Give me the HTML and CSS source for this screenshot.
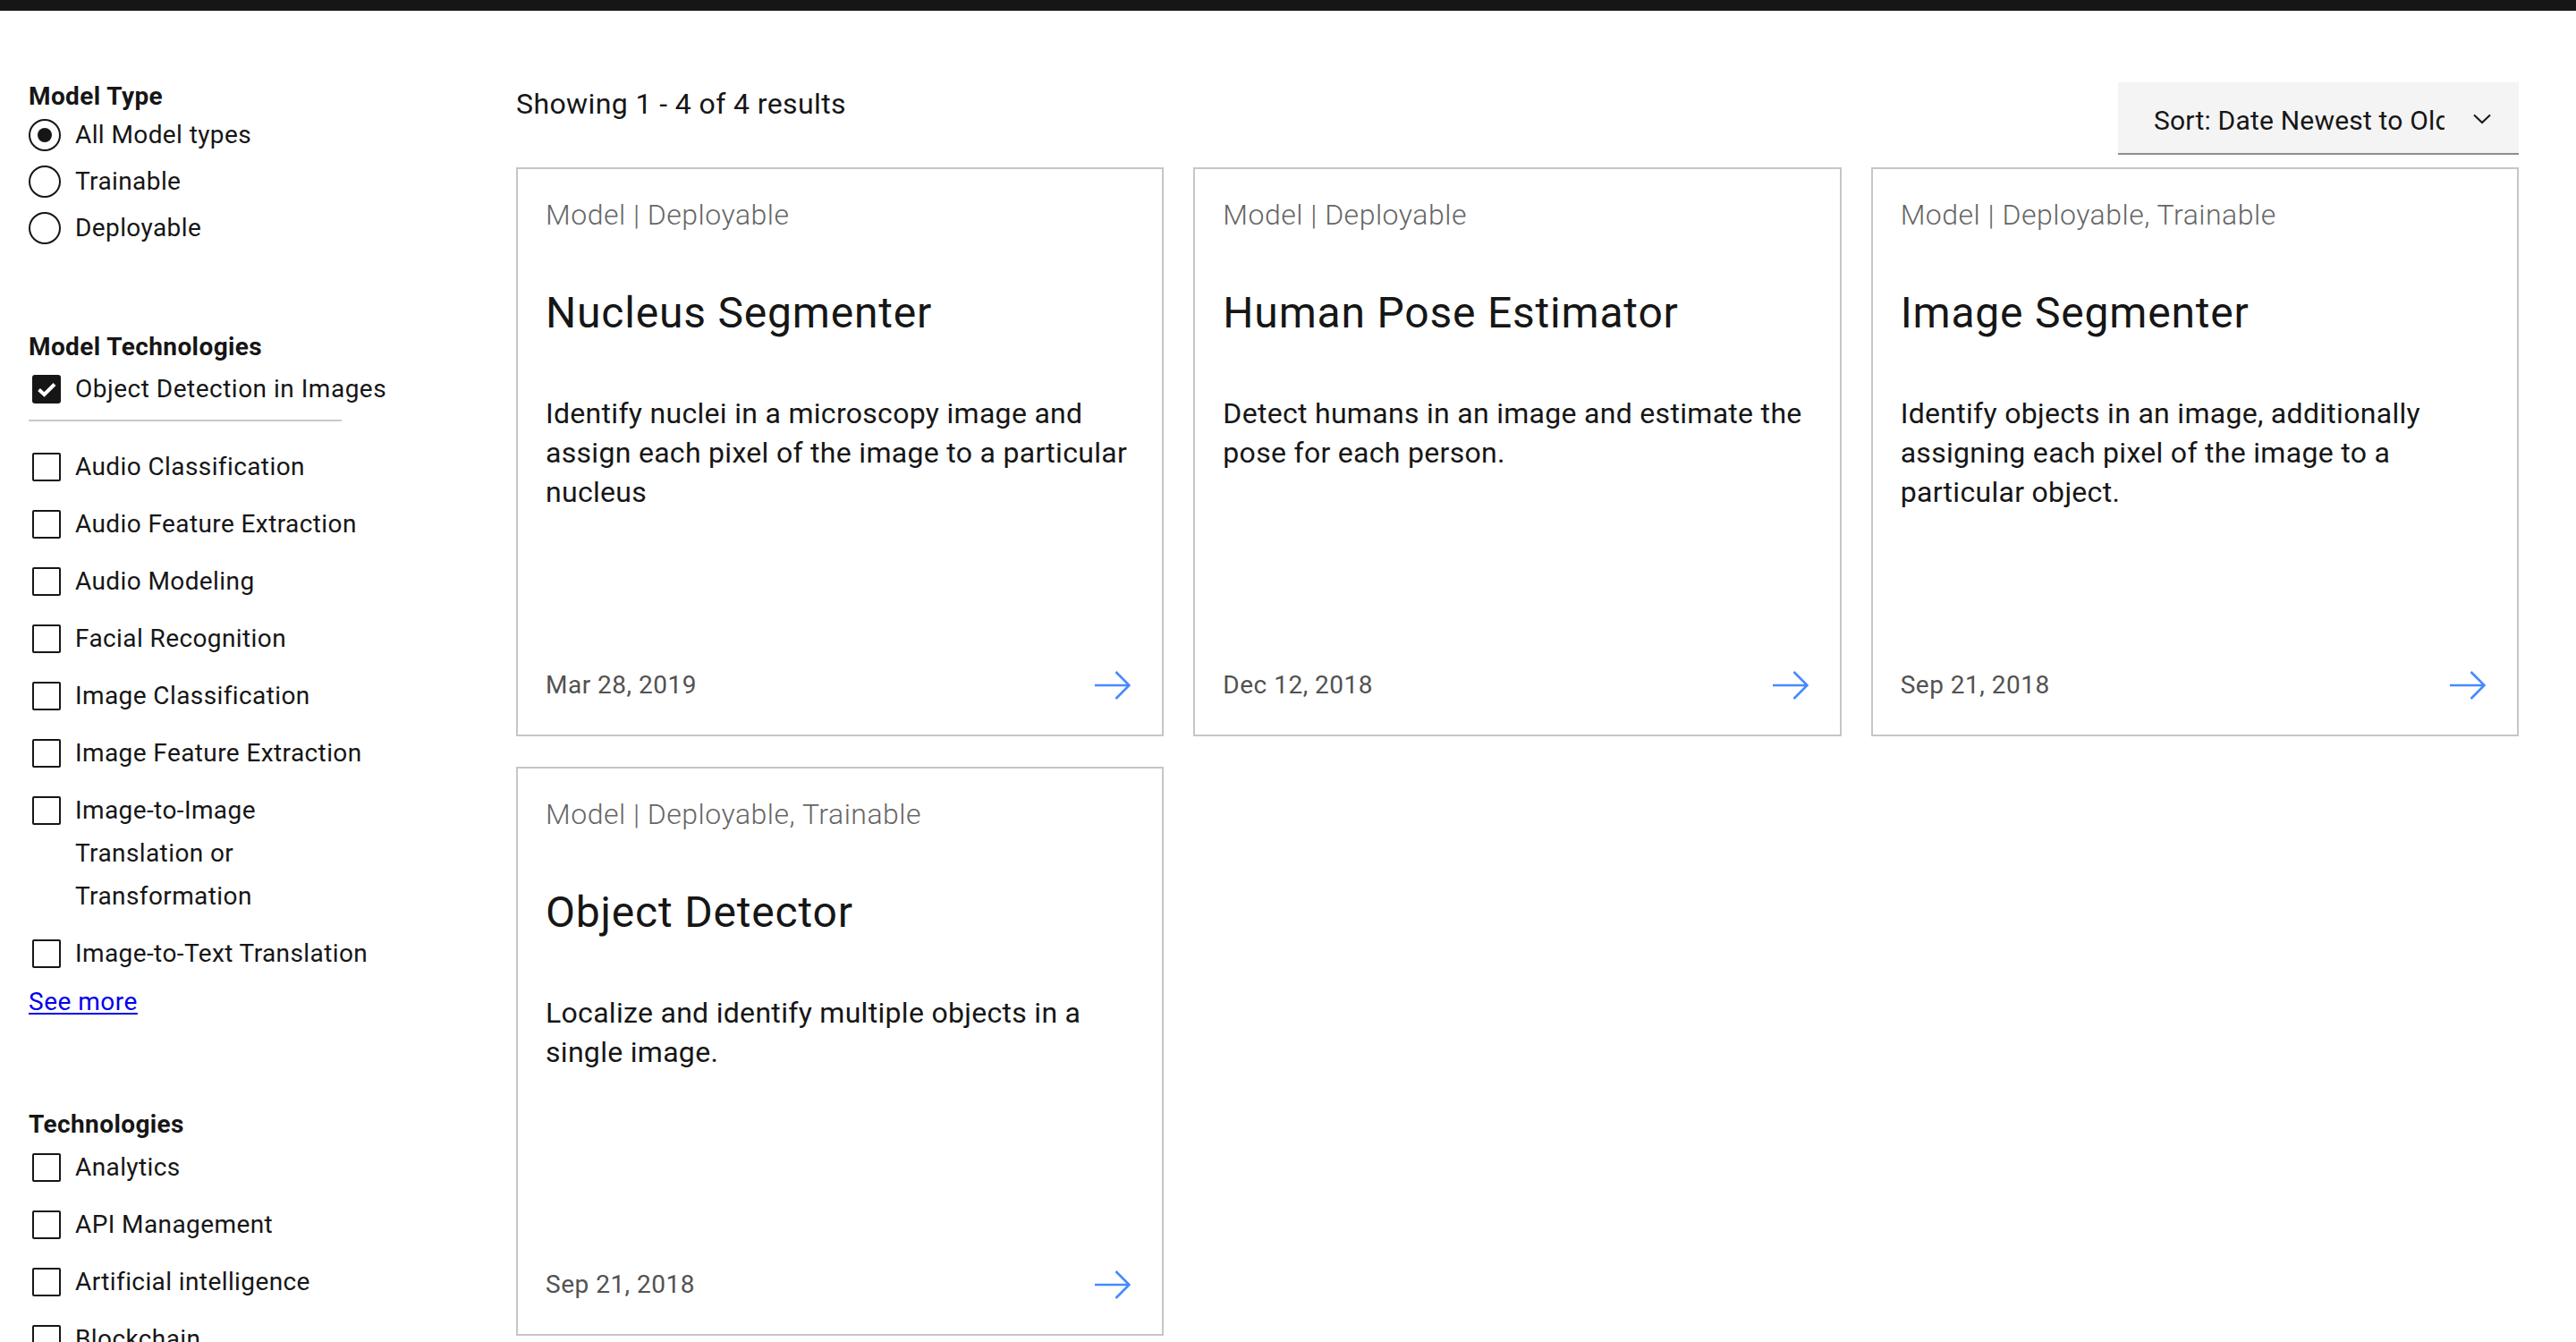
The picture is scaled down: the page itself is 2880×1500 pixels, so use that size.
FILE: index.html
```html
<!DOCTYPE html>
<html lang="en">
<head>
<meta charset="utf-8">
<title>Model Asset Exchange</title>
<link rel="stylesheet" href="styles.css">
</head>
<body>
<div class="topbar"></div>
<div class="page">
  <aside class="sidebar">
    <section class="filter">
      <h3 class="filter-title">Model Type</h3>
      <ul class="radio-list">
        <li class="radio-row"><span class="radio is-checked"></span><span class="opt-label">All Model types</span></li>
        <li class="radio-row"><span class="radio"></span><span class="opt-label">Trainable</span></li>
        <li class="radio-row"><span class="radio"></span><span class="opt-label">Deployable</span></li>
      </ul>
    </section>

    <section class="filter filter--model-tech">
      <h3 class="filter-title">Model Technologies</h3>
      <div class="check-row check-row--selected">
        <span class="checkbox is-checked"><svg viewBox="0 0 32 32" width="32" height="32"><path d="M7.5 16.5 L13.5 22 L25 10.5" fill="none" stroke="#ffffff" stroke-width="4"/></svg></span>
        <span class="opt-label opt-label--nowrap">Object Detection in Images</span>
      </div>
      <hr class="divider">
      <ul class="check-list">
        <li class="check-row"><span class="checkbox"></span><span class="opt-label">Audio Classification</span></li>
        <li class="check-row"><span class="checkbox"></span><span class="opt-label">Audio Feature Extraction</span></li>
        <li class="check-row"><span class="checkbox"></span><span class="opt-label">Audio Modeling</span></li>
        <li class="check-row"><span class="checkbox"></span><span class="opt-label">Facial Recognition</span></li>
        <li class="check-row"><span class="checkbox"></span><span class="opt-label">Image Classification</span></li>
        <li class="check-row"><span class="checkbox"></span><span class="opt-label">Image Feature Extraction</span></li>
        <li class="check-row"><span class="checkbox"></span><span class="opt-label">Image-to-Image Translation or Transformation</span></li>
        <li class="check-row"><span class="checkbox"></span><span class="opt-label">Image-to-Text Translation</span></li>
      </ul>
      <a class="see-more" href="#">See more</a>
    </section>

    <section class="filter filter--tech">
      <h3 class="filter-title">Technologies</h3>
      <ul class="check-list check-list--first">
        <li class="check-row"><span class="checkbox"></span><span class="opt-label">Analytics</span></li>
        <li class="check-row"><span class="checkbox"></span><span class="opt-label">API Management</span></li>
        <li class="check-row"><span class="checkbox"></span><span class="opt-label">Artificial intelligence</span></li>
        <li class="check-row"><span class="checkbox"></span><span class="opt-label">Blockchain</span></li>
        <li class="check-row"><span class="checkbox"></span><span class="opt-label">Cloud</span></li>
      </ul>
    </section>
  </aside>

  <main class="results">
    <div class="results-head">
      <p class="results-count">Showing 1 - 4 of 4 results</p>
      <div class="sort-select">
        <span class="sort-text">Sort: Date Newest to Oldest</span>
        <svg class="chevron" viewBox="0 0 20 12" width="20" height="12"><path d="M1 1.5 L10 10 L19 1.5" fill="none" stroke="#161616" stroke-width="2"/></svg>
      </div>
    </div>

    <div class="card-grid">
      <article class="card">
        <p class="card-tag">Model | Deployable</p>
        <h2 class="card-title">Nucleus Segmenter</h2>
        <p class="card-desc">Identify nuclei in a microscopy image and assign each pixel of the image to a particular nucleus</p>
        <div class="card-foot">
          <span class="card-date">Mar 28, 2019</span>
          <svg class="arrow" viewBox="0 0 40 32" width="40" height="32"><path d="M0 16 H38.5 M23.5 1 L38.5 16 L23.5 31" fill="none" stroke="#4589ff" stroke-width="2.6"/></svg>
        </div>
      </article>
      <article class="card">
        <p class="card-tag">Model | Deployable</p>
        <h2 class="card-title">Human Pose Estimator</h2>
        <p class="card-desc">Detect humans in an image and estimate the pose for each person.</p>
        <div class="card-foot">
          <span class="card-date">Dec 12, 2018</span>
          <svg class="arrow" viewBox="0 0 40 32" width="40" height="32"><path d="M0 16 H38.5 M23.5 1 L38.5 16 L23.5 31" fill="none" stroke="#4589ff" stroke-width="2.6"/></svg>
        </div>
      </article>
      <article class="card">
        <p class="card-tag">Model | Deployable, Trainable</p>
        <h2 class="card-title">Image Segmenter</h2>
        <p class="card-desc">Identify objects in an image, additionally assigning each pixel of the image to a particular object.</p>
        <div class="card-foot">
          <span class="card-date">Sep 21, 2018</span>
          <svg class="arrow" viewBox="0 0 40 32" width="40" height="32"><path d="M0 16 H38.5 M23.5 1 L38.5 16 L23.5 31" fill="none" stroke="#4589ff" stroke-width="2.6"/></svg>
        </div>
      </article>
      <article class="card">
        <p class="card-tag">Model | Deployable, Trainable</p>
        <h2 class="card-title">Object Detector</h2>
        <p class="card-desc">Localize and identify multiple objects in a single image.</p>
        <div class="card-foot">
          <span class="card-date">Sep 21, 2018</span>
          <svg class="arrow" viewBox="0 0 40 32" width="40" height="32"><path d="M0 16 H38.5 M23.5 1 L38.5 16 L23.5 31" fill="none" stroke="#4589ff" stroke-width="2.6"/></svg>
        </div>
      </article>
    </div>
  </main>
</div>
</body>
</html>
```

FILE: styles.css
```css
* {
  box-sizing: border-box;
}

html, body {
  margin: 0;
  padding: 0;
  background: #ffffff;
}

body {
  font-family: Roboto, "Liberation Sans", Arial, sans-serif;
  color: #161616;
  overflow: hidden;
}

p, h2, h3, ul {
  margin: 0;
  padding: 0;
}

ul {
  list-style: none;
}

.topbar {
  height: 12px;
  background: #161616;
}

.page {
  display: flex;
  align-items: flex-start;
}

/* ---------- sidebar ---------- */
.sidebar {
  flex: 0 0 577px;
  padding: 76px 0 0 32px;
}

.filter-title {
  font-size: 28px;
  line-height: 40px;
  font-weight: 700;
  letter-spacing: 0.4px;
  color: #161616;
}

.filter--model-tech {
  margin-top: 91px;
}

.filter--tech {
  margin-top: 97px;
}

.radio-list {
  display: flex;
  flex-direction: column;
  gap: 8px;
  margin-top: 1px;
}

.radio-row {
  display: flex;
  align-items: center;
  height: 44px;
}

.radio {
  flex: 0 0 36px;
  width: 36px;
  height: 36px;
  border: 2px solid #161616;
  border-radius: 50%;
  display: flex;
  align-items: center;
  justify-content: center;
  margin-right: 16px;
}

.radio.is-checked::after {
  content: "";
  width: 16px;
  height: 16px;
  border-radius: 50%;
  background: #161616;
}

.opt-label {
  font-size: 28px;
  line-height: 48px;
  letter-spacing: 0.4px;
  color: #161616;
  max-width: 340px;
}

.radio-row .opt-label {
  line-height: 44px;
}

.opt-label--nowrap {
  white-space: nowrap;
  max-width: none;
  letter-spacing: 0.5px;
}

.check-row {
  display: flex;
  align-items: flex-start;
}

.check-row--selected {
  margin-top: 3px;
}

.checkbox {
  flex: 0 0 32px;
  width: 32px;
  height: 32px;
  margin: 8px 16px 0 4px;
  border: 2px solid #161616;
  border-radius: 2px;
  background: #ffffff;
}

.checkbox.is-checked {
  border: none;
  border-radius: 3px;
  background: #161616;
}

.checkbox svg {
  display: block;
}

.divider {
  width: 350px;
  height: 2px;
  margin: 10px 0 0 0;
  border: none;
  background: #c8c8c8;
}

.check-list {
  display: flex;
  flex-direction: column;
  gap: 16px;
  margin-top: 27px;
}

.check-list--first {
  margin-top: 4px;
}

.see-more {
  display: inline-block;
  margin-top: 10px;
  font-size: 28px;
  line-height: 40px;
  letter-spacing: 0.5px;
  color: #0000ee;
  text-decoration: underline;
  text-underline-offset: 3px;
  text-decoration-thickness: 2px;
}

/* ---------- results ---------- */
.results {
  flex: 1 1 auto;
  padding: 80px 64px 0 0;
}

.results-head {
  display: flex;
  justify-content: space-between;
  align-items: flex-start;
}

.results-count {
  margin-top: 2px;
  font-size: 32px;
  line-height: 44px;
  letter-spacing: 0.4px;
  color: #161616;
}

.sort-select {
  width: 448px;
  height: 81px;
  display: flex;
  align-items: center;
  padding: 6px 31px 0 40px;
  background: #f4f4f4;
  border-bottom: 2px solid #8d8d8d;
}

.sort-text {
  flex: 0 0 325px;
  width: 325px;
  overflow: hidden;
  white-space: nowrap;
  font-size: 30px;
  line-height: 40px;
  letter-spacing: 0.2px;
  color: #161616;
}

.chevron {
  margin-left: auto;
  margin-top: -4px;
  display: block;
}

.card-grid {
  margin-top: 14px;
  display: grid;
  grid-template-columns: repeat(3, 1fr);
  gap: 34px 33px;
}

.card {
  height: 636px;
  display: flex;
  flex-direction: column;
  padding: 31px 25px 35px 31px;
  border: 2px solid #c6c6c6;
  background: #ffffff;
}

.card-tag {
  font-size: 32px;
  line-height: 40px;
  font-weight: 300;
  letter-spacing: 0.5px;
  color: #666666;
}

.card-title {
  margin-top: 62px;
  font-size: 48px;
  line-height: 56px;
  font-weight: 400;
  letter-spacing: 0.8px;
  color: #161616;
}

.card-desc {
  margin-top: 62px;
  font-size: 32px;
  line-height: 44px;
  letter-spacing: 0.3px;
  color: #161616;
}

.card-foot {
  margin-top: auto;
  display: flex;
  justify-content: space-between;
  align-items: center;
  height: 40px;
}

.card-date {
  font-size: 28px;
  line-height: 40px;
  letter-spacing: 0.5px;
  color: #525252;
}

.arrow {
  display: block;
  margin-right: 10px;
}
```
